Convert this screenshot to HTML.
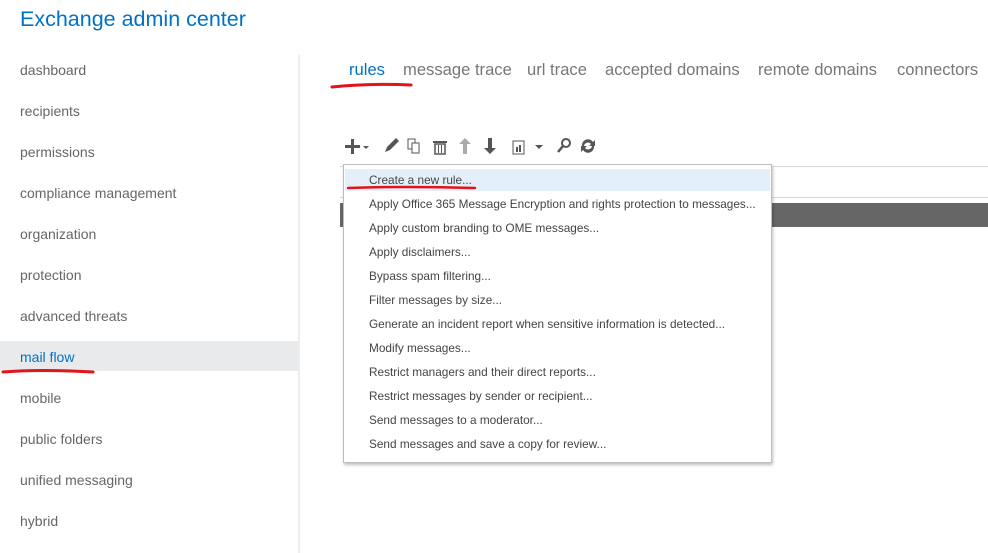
<!DOCTYPE html>
<html><head><style>
body{margin:0;width:988px;height:553px;overflow:hidden;background:#fff;font-family:"Liberation Sans",sans-serif;position:relative}
.a{position:absolute;white-space:nowrap}
.title{left:20px;top:7px;font-size:21.5px;color:#0072c6}
.side{left:20px;font-size:14px;color:#666}
.tab{top:60px;font-size:16.6px;color:#777}
.dd{left:343px;top:164px;width:427px;height:297px;border:1px solid #b8bec2;background:#fff;box-shadow:1px 2px 3px rgba(0,0,0,.25)}
.it{position:absolute;left:25px;font-size:11.8px;color:#444}
</style></head><body>
<div class="a title">Exchange admin center</div>
<div class="a" style="left:298px;top:55px;width:2px;height:498px;background:#eceded"></div>
<div class="a" style="left:0;top:341px;width:298px;height:30px;background:#e9eaec"></div>
<div class="a side" style="top:62px">dashboard</div>
<div class="a side" style="top:103px">recipients</div>
<div class="a side" style="top:144px">permissions</div>
<div class="a side" style="top:185px">compliance management</div>
<div class="a side" style="top:226px">organization</div>
<div class="a side" style="top:267px">protection</div>
<div class="a side" style="top:308px">advanced threats</div>
<div class="a side" style="top:349px;color:#0072c6">mail flow</div>
<div class="a side" style="top:390px">mobile</div>
<div class="a side" style="top:431px">public folders</div>
<div class="a side" style="top:472px">unified messaging</div>
<div class="a side" style="top:513px">hybrid</div>
<svg class="a" style="left:0;top:0" width="988" height="553">
<path d="M3 372 Q40 369 93 372" stroke="#e0141a" stroke-width="3" fill="none" stroke-linecap="round"/>
<path d="M332 87 Q370 83 411 85" stroke="#e0141a" stroke-width="3" fill="none" stroke-linecap="round"/>
</svg>
<div class="a tab" style="left:349px;color:#0072c6">rules</div>
<div class="a tab" style="left:403px">message trace</div>
<div class="a tab" style="left:527px">url trace</div>
<div class="a tab" style="left:605px">accepted domains</div>
<div class="a tab" style="left:758px">remote domains</div>
<div class="a tab" style="left:897px">connectors</div>
<svg class="a" style="left:340px;top:135px" width="270" height="22" fill="#555">
<rect x="5" y="10" width="15" height="3"/><rect x="11" y="4" width="3" height="15"/>
<path d="M23 11h6l-3 3z"/>
<path d="M45 17l2-5 9-9 3 3-9 9z"/>
<rect x="68" y="4" width="7" height="10" fill="none" stroke="#555"/><rect x="72" y="8" width="7" height="10" fill="#fff" stroke="#555"/>
<rect x="93" y="6" width="14" height="2"/><rect x="95" y="9" width="10" height="10" fill="none" stroke="#555" stroke-width="1.5"/><rect x="98" y="10" width="1" height="8"/><rect x="101" y="10" width="1" height="8"/>
<path d="M125 3l-6 6h4v10h4V9h4z" fill="#aaa"/>
<path d="M150 19l-6-6h4V3h4v10h4z"/>
<rect x="173" y="6" width="11" height="13" fill="none" stroke="#555"/><rect x="176" y="12" width="2" height="5"/><rect x="179" y="10" width="2" height="7"/>
<path d="M195 10h8l-4 4z"/>
<circle cx="226" cy="8" r="4" fill="none" stroke="#555" stroke-width="2"/><path d="M223 11l-5 6" stroke="#555" stroke-width="2.5"/>
<path d="M242 11a6 6 0 0 1 11-4l2-2v6h-6l2-2a4 4 0 0 0-7 2zM254 11a6 6 0 0 1-11 4l-2 2v-6h6l-2 2a4 4 0 0 0 7-2z"/>
</svg>
<div class="a" style="left:340px;top:166px;width:648px;height:1px;background:#d5d8da"></div>
<div class="a" style="left:340px;top:197px;width:648px;height:1px;background:#d5d8da"></div>
<div class="a" style="left:340px;top:203px;width:648px;height:24px;background:#666"></div>
<div class="a dd">
<div style="position:absolute;left:1px;top:4px;width:425px;height:22px;background:#e3f0f9"></div>
<div class="it" style="top:8px">Create a new rule...</div>
<div class="it" style="top:32px">Apply Office 365 Message Encryption and rights protection to messages...</div>
<div class="it" style="top:56px">Apply custom branding to OME messages...</div>
<div class="it" style="top:80px">Apply disclaimers...</div>
<div class="it" style="top:104px">Bypass spam filtering...</div>
<div class="it" style="top:128px">Filter messages by size...</div>
<div class="it" style="top:152px">Generate an incident report when sensitive information is detected...</div>
<div class="it" style="top:176px">Modify messages...</div>
<div class="it" style="top:200px">Restrict managers and their direct reports...</div>
<div class="it" style="top:224px">Restrict messages by sender or recipient...</div>
<div class="it" style="top:248px">Send messages to a moderator...</div>
<div class="it" style="top:272px">Send messages and save a copy for review...</div>
<svg style="position:absolute;left:0;top:0" width="200" height="30"><path d="M4 23 Q60 21 131 23" stroke="#e0141a" stroke-width="2.5" fill="none" stroke-linecap="round"/></svg>
</div>
</body></html>
